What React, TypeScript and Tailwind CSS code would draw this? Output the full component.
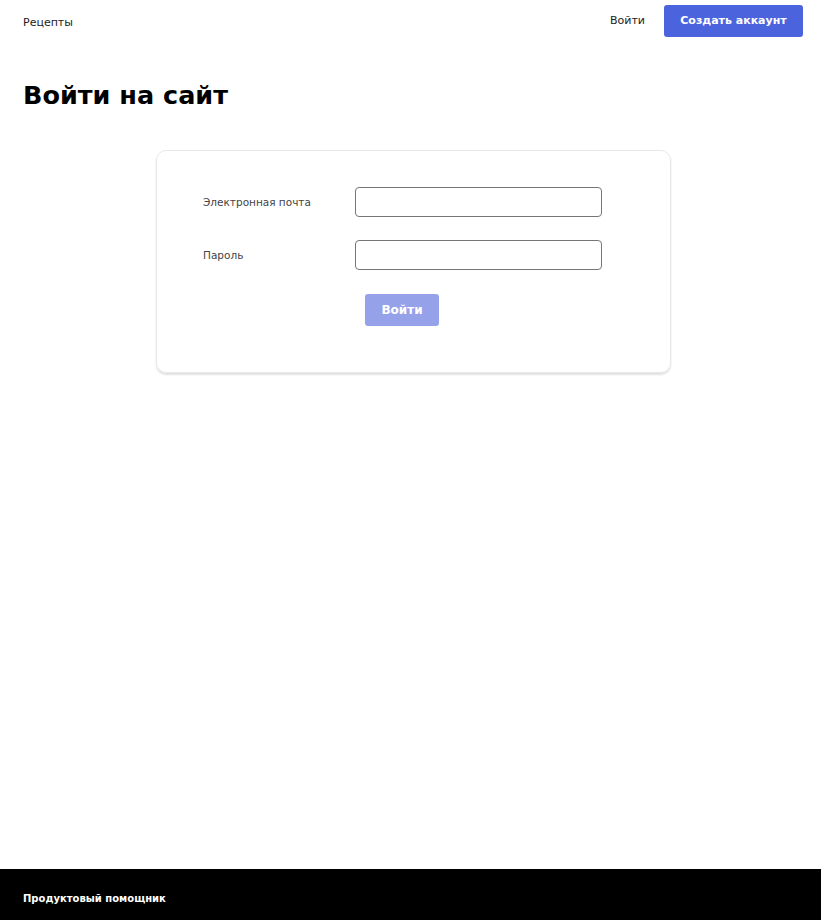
export default function App() {
  return (
    <div className="min-h-screen flex flex-col bg-white text-black" style={{ fontFamily: '"DejaVu Sans", "Open Sans", sans-serif' }}>
      <header className="flex items-center justify-between h-[42px] pl-[23px] pr-[18px]">
        <a className="text-[11px] text-[#222] mt-[4px]">Рецепты</a>
        <nav className="flex items-center gap-[19px]">
          <a className="text-[11px] text-[#222] mt-[1px]">Войти</a>
          <button className="h-[32px] w-[139px] rounded-[3px] bg-[#4b63dd] text-white text-[11px] font-bold">
            Создать аккаунт
          </button>
        </nav>
      </header>

      <main className="flex-1 px-[23px]">
        <h1 className="mt-[37px] text-[25.5px] leading-[32px] font-bold">Войти на сайт</h1>

        <div className="mt-[39px] ml-[133px] w-[515px] rounded-[10px] border border-[#e8e8e8] shadow-[0_2px_2px_rgba(0,0,0,0.12)] pt-[36px] pb-[46px] px-[46px]">
          <div className="flex flex-col gap-[23px]">
            <label className="flex items-center">
              <span className="w-[152px] text-[10.5px] text-[#444] mt-[2px]">Электронная почта</span>
              <input className="w-[247px] h-[30px] rounded-[4px] border border-[#767676] px-2 outline-none" />
            </label>
            <label className="flex items-center">
              <span className="w-[152px] text-[10.5px] text-[#444] mt-[2px]">Пароль</span>
              <input type="password" className="w-[247px] h-[30px] rounded-[4px] border border-[#767676] px-2 outline-none" />
            </label>
          </div>
          <div className="pl-[162px] mt-[24px]">
            <button className="w-[74px] h-[32px] rounded-[3px] bg-[#95a2ea] text-white text-[12px] font-bold">Войти</button>
          </div>
        </div>
      </main>

      <footer className="h-[51px] bg-black flex items-center px-[23px]">
        <span className="text-white text-[10px] font-bold mt-[8px]">Продуктовый помощник</span>
      </footer>
    </div>
  );
}
